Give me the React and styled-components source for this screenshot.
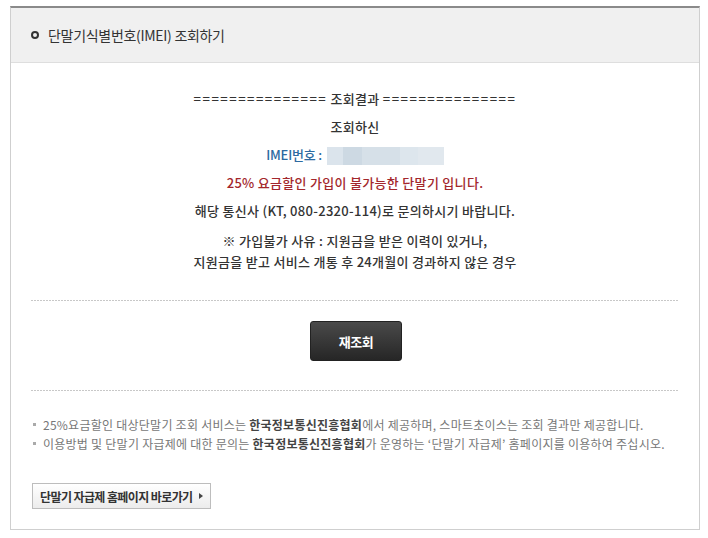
import React from "react";
import styled, { createGlobalStyle } from "styled-components";

const Global = createGlobalStyle`
  html, body { margin: 0; padding: 0; background: #fff; }
  body { font-family: "Noto Sans CJK KR", "Noto Sans", sans-serif; color: #333; }
`;

const Page = styled.div`
  padding: 6px 9px 0 10px;
`;

const Box = styled.section`
  width: 688px;
  border: 1px solid #cfcfcf;
  border-top: 2px solid #8a8a8a;
  background: #fff;
`;

const Header = styled.h2`
  margin: 0;
  height: 54px;
  background: #f0f0f0;
  border-bottom: 1px solid #dedede;
  display: flex;
  align-items: center;
  gap: 9px;
  padding-left: 20px;
  font-size: 14px;
  font-weight: 400;
  color: #333;
  letter-spacing: -0.3px;
`;

const Ring = styled.span`
  width: 4px;
  height: 4px;
  border: 2.5px solid #333;
  border-radius: 50%;
`;

const Result = styled.div`
  padding-top: 22px;
  text-align: center;
  font-size: 13px;
  font-weight: 500;
  letter-spacing: 0.3px;
`;

const Line = styled.p`
  margin: 0;
  line-height: 28px;
  color: ${(p) => p.$color || "#333"};
`;

const Rule = styled.span`
  letter-spacing: 1.5px;
`;

const Label = styled.span`
  color: #2d6aa1;
  letter-spacing: -0.2px;
`;

const Masked = styled.span`
  display: inline-block;
  vertical-align: middle;
  width: 117px;
  height: 18px;
  margin-left: 5px;
  background: linear-gradient(
    90deg,
    #dbe4ec 0 14%,
    #cdd9e3 14% 30%,
    #d6e0e8 30% 62%,
    #dde6ed 62% 78%,
    #e1e8ee 78%
  );
`;

const Reason = styled.p`
  margin: 5px 0 0;
  line-height: 21px;
  color: #333;
`;

const Dashed = styled.hr`
  margin: ${(p) => p.$mt}px 20px 0;
  border: 0;
  height: 1px;
  background-image: linear-gradient(90deg, #c8c8c8 0 2px, transparent 2px 3px);
  background-size: 3px 1px;
`;

const BtnRow = styled.div`
  display: flex;
  justify-content: center;
  padding: 20px 0 29px;
`;

const DarkButton = styled.button`
  width: 92px;
  height: 40px;
  border: 1px solid #222;
  border-radius: 3px;
  background: linear-gradient(#4a4a4a, #262626);
  color: #fff;
  font-family: inherit;
  font-size: 13px;
  font-weight: 700;
  letter-spacing: -0.5px;
  margin-left: 2px;
`;

const Notes = styled.ul`
  list-style: none;
  margin: 24px 0 0;
  padding: 0 0 0 22px;
  font-size: 12px;
  line-height: 19px;
  color: #777;
  letter-spacing: 0.25px;
`;

const Note = styled.li`
  position: relative;
  padding-left: 10px;
  &::before {
    content: "";
    position: absolute;
    left: 0;
    top: 8px;
    width: 3px;
    height: 3px;
    background: #aaa;
  }
  b { color: #444; font-weight: 700; }
`;

const LinkButton = styled.button`
  margin: 30px 0 20px 21px;
  height: 26px;
  padding: 0 7px 0 7px;
  display: flex;
  align-items: center;
  gap: 6px;
  border: 1px solid #bdbdbd;
  background: linear-gradient(#ffffff, #ececec);
  font-family: inherit;
  font-size: 12px;
  font-weight: 700;
  color: #333;
  letter-spacing: -0.6px;
`;

const Arrow = styled.span`
  width: 0;
  height: 0;
  border-left: 4px solid #444;
  border-top: 3px solid transparent;
  border-bottom: 3px solid transparent;
`;

export default function App() {
  return (
    <Page>
      <Global />
      <Box>
        <Header>
          <Ring />
          단말기식별번호(IMEI) 조회하기
        </Header>
        <Result>
          <Line>
            <Rule>===============</Rule> 조회결과 <Rule>===============</Rule>
          </Line>
          <Line>조회하신</Line>
          <Line>
            <Label>IMEI번호 :</Label>
            <Masked />
          </Line>
          <Line $color="#a3272c">25% 요금할인 가입이 불가능한 단말기 입니다.</Line>
          <Line>해당 통신사 (KT, 080-2320-114)로 문의하시기 바랍니다.</Line>
          <Reason>
            ※ 가입불가 사유 : 지원금을 받은 이력이 있거나,
            <br />
            지원금을 받고 서비스 개통 후 24개월이 경과하지 않은 경우
          </Reason>
        </Result>
        <Dashed $mt={28} />
        <BtnRow>
          <DarkButton>재조회</DarkButton>
        </BtnRow>
        <Dashed $mt={0} />
        <Notes>
          <Note>
            25%요금할인 대상단말기 조회 서비스는 <b>한국정보통신진흥협회</b>에서 제공하며, 스마트초이스는 조회 결과만 제공합니다.
          </Note>
          <Note>
            이용방법 및 단말기 자급제에 대한 문의는 <b>한국정보통신진흥협회</b>가 운영하는 ‘단말기 자급제’ 홈페이지를 이용하여 주십시오.
          </Note>
        </Notes>
        <LinkButton>
          단말기 자급제 홈페이지 바로가기
          <Arrow />
        </LinkButton>
      </Box>
    </Page>
  );
}
